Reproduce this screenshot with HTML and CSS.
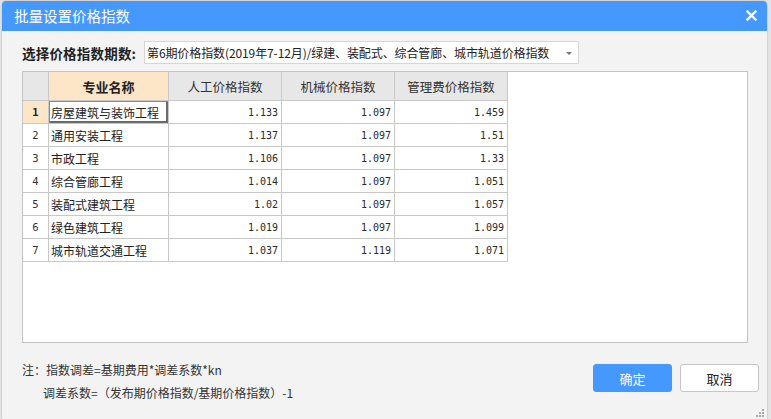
FILE: index.html
```html
<!DOCTYPE html>
<html lang="zh">
<head>
<meta charset="utf-8">
<title>批量设置价格指数</title>
<link rel="stylesheet" href="styles.css">
</head>
<body>
<div class="dialog">
  <div class="titlebar">
    <span class="title">批量设置价格指数</span>
    <svg class="close" width="11" height="11" viewBox="0 0 11 11"><path d="M1.5 1.5 L9.5 9.5 M9.5 1.5 L1.5 9.5" stroke="#fff" stroke-width="2.4" stroke-linecap="square"/></svg>
  </div>
  <div class="content">
    <div class="period">
      <span class="period-label">选择价格指数期数:</span>
      <div class="select">
        <span class="select-text">第6期价格指数(2019年7-12月)/绿建、装配式、综合管廊、城市轨道价格指数</span>
        <span class="caret"></span>
      </div>
    </div>
    <div class="grid-box">
      <div class="grid">
        <div class="hc"></div>
        <div class="hc hc-active">专业名称</div>
        <div class="hc">人工价格指数</div>
        <div class="hc">机械价格指数</div>
        <div class="hc">管理费价格指数</div>

        <div class="rn rn-active">1</div>
        <div class="c name selected">房屋建筑与装饰工程</div>
        <div class="c num">1.133</div>
        <div class="c num">1.097</div>
        <div class="c num">1.459</div>

        <div class="rn">2</div>
        <div class="c name">通用安装工程</div>
        <div class="c num">1.137</div>
        <div class="c num">1.097</div>
        <div class="c num">1.51</div>

        <div class="rn">3</div>
        <div class="c name">市政工程</div>
        <div class="c num">1.106</div>
        <div class="c num">1.097</div>
        <div class="c num">1.33</div>

        <div class="rn">4</div>
        <div class="c name">综合管廊工程</div>
        <div class="c num">1.014</div>
        <div class="c num">1.097</div>
        <div class="c num">1.051</div>

        <div class="rn">5</div>
        <div class="c name">装配式建筑工程</div>
        <div class="c num">1.02</div>
        <div class="c num">1.097</div>
        <div class="c num">1.057</div>

        <div class="rn">6</div>
        <div class="c name">绿色建筑工程</div>
        <div class="c num">1.019</div>
        <div class="c num">1.097</div>
        <div class="c num">1.099</div>

        <div class="rn">7</div>
        <div class="c name">城市轨道交通工程</div>
        <div class="c num">1.037</div>
        <div class="c num">1.119</div>
        <div class="c num">1.071</div>
      </div>
    </div>
    <div class="footer">
      <div class="notes">
        <div>注：指数调差=基期费用*调差系数*kn</div>
        <div class="indent">调差系数=（发布期价格指数/基期价格指数）-1</div>
      </div>
      <div class="buttons">
        <button class="btn btn-primary">确定</button>
        <button class="btn">取消</button>
      </div>
    </div>
    <svg class="grip" width="8" height="8" viewBox="0 0 8 8">
      <rect x="6" y="0" width="2" height="2" fill="#aaa"/>
      <rect x="3" y="3" width="2" height="2" fill="#aaa"/>
      <rect x="6" y="3" width="2" height="2" fill="#aaa"/>
      <rect x="0" y="6" width="2" height="2" fill="#aaa"/>
      <rect x="3" y="6" width="2" height="2" fill="#aaa"/>
      <rect x="6" y="6" width="2" height="2" fill="#aaa"/>
    </svg>
  </div>
</div>
</body>
</html>
```

FILE: styles.css
```css
* { box-sizing: border-box; }
html, body { margin: 0; padding: 0; }
body {
  width: 771px;
  height: 419px;
  overflow: hidden;
  background: #e4e4e4;
  font-family: "Noto Sans CJK SC", "Noto Sans", sans-serif;
  color: #222;
}
.dialog {
  margin: 1px 0 0 2px;
  width: 765px;
  height: 420px;
  background: #f3f3f3;
  border-radius: 4px;
  overflow: hidden;
  display: flex;
  flex-direction: column;
  box-shadow: 0 0 2px rgba(0,0,0,0.25);
}
.titlebar {
  height: 30px;
  background: #4599fe;
  display: flex;
  align-items: center;
  justify-content: space-between;
  padding: 0 10px 0 12px;
  flex: none;
}
.title {
  color: #fff;
  font-size: 14.5px;
  line-height: 30px;
}
.close { display: block; margin-top: -1px; }
.content {
  position: relative;
  flex: 1;
  padding: 10px 0 0 20px;
}
.period {
  display: flex;
  align-items: center;
  height: 23px;
}
.period-label {
  font-size: 13.5px;
  font-weight: bold;
  color: #222;
  width: 122px;
  letter-spacing: 0.2px;
}
.select {
  width: 435px;
  height: 23px;
  background: #fff;
  border: 1px solid #d6d6d6;
  display: flex;
  align-items: center;
  justify-content: space-between;
  padding: 0 6px 0 2px;
}
.select-text {
  font-size: 12px;
  white-space: nowrap;
  color: #222;
  letter-spacing: -0.1px;
}
.caret {
  width: 0;
  height: 0;
  border-left: 3px solid transparent;
  border-right: 3px solid transparent;
  border-top: 3px solid #777;
  margin-top: 1px;
}
.grid-box {
  margin-top: 7px;
  width: 726px;
  height: 272px;
  background: #fff;
  border: 1px solid #c4c4c4;
}
.grid {
  display: grid;
  grid-template-columns: 26px 120px 113px 113px 113px;
  grid-template-rows: 29px repeat(7, 23px);
  width: 485px;
}
.hc, .rn, .c {
  border-right: 1px solid #c8c8c8;
  border-bottom: 1px solid #c8c8c8;
  display: flex;
  align-items: center;
  white-space: nowrap;
}
.hc {
  background: #e7e7e7;
  justify-content: center;
  font-size: 12.5px;
  color: #333;
}
.hc-active {
  background: #fde5c8;
  font-weight: bold;
  font-size: 13px;
  color: #222;
}
.rn {
  background: #fff;
  justify-content: center;
  font-family: "DejaVu Sans Mono", "Liberation Mono", monospace;
  font-size: 10.5px;
  color: #333;
}
.rn-active {
  background: #fde5c8;
  font-weight: bold;
  color: #222;
}
.c {
  font-size: 12px;
  color: #222;
}
.name { padding-left: 2px; }
.num {
  justify-content: flex-end;
  padding-right: 3px;
  font-family: "DejaVu Sans Mono", "Liberation Mono", monospace;
  font-size: 10px;
  color: #2a2a2a;
}
.selected {
  box-shadow: inset 1px 1px 0 #4599fe, inset -2px -2px 0 #6a6a6a;
}
.footer {
  display: flex;
  justify-content: space-between;
  align-items: flex-start;
}
.notes {
  margin-top: 15px;
  font-size: 12px;
  line-height: 23px;
  color: #333;
}
.indent { padding-left: 21px; }
.buttons {
  margin-top: 21px;
  margin-right: 8px;
  display: flex;
  gap: 8px;
}
.btn {
  width: 79px;
  height: 28px;
  border: 1px solid #c6c6c6;
  border-radius: 3px;
  background: #fff;
  font-family: "Noto Sans CJK SC", "Noto Sans", sans-serif;
  font-size: 13px;
  color: #222;
  padding: 0;
}
.btn-primary {
  background: #4599fe;
  border-color: #4599fe;
  color: #fff;
}
.grip {
  position: absolute;
  right: 3px;
  bottom: 4px;
}
```
